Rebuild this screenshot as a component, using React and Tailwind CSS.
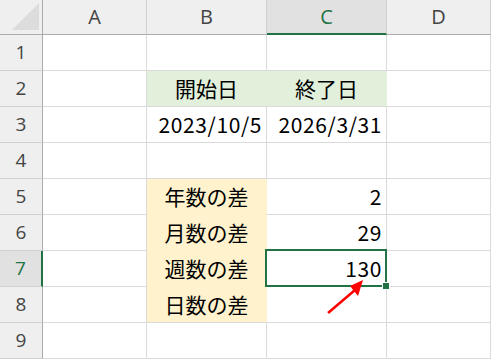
// App.jsx — Excel 風シート（週数の差）
const COLS = ['A', 'B', 'C', 'D'];
const ROWS = [1, 2, 3, 4, 5, 6, 7, 8, 9];

const GREEN = 'bg-[#e2efda] border-r-[#e2efda]';
const YELLOW = 'bg-[#fff2cc] border-r-[#fff2cc]';

// 各セルの内容・配置・塗り
const CELLS = {
  B2: { text: '開始日', align: 'center', fill: GREEN },
  C2: { text: '終了日', align: 'center', fill: GREEN },
  B3: { text: '2023/10/5', align: 'right' },
  C3: { text: '2026/3/31', align: 'right' },
  B5: { text: '年数の差', align: 'center', fill: YELLOW + ' border-b-[#fff2cc]' },
  C5: { text: '2', align: 'right' },
  B6: { text: '月数の差', align: 'center', fill: YELLOW + ' border-b-[#fff2cc]' },
  C6: { text: '29', align: 'right' },
  B7: { text: '週数の差', align: 'center', fill: YELLOW + ' border-b-[#fff2cc]' },
  C7: { text: '130', align: 'right' },
  B8: { text: '日数の差', align: 'center', fill: YELLOW },
};

function Cell({ id }) {
  const c = CELLS[id];
  const align = c?.align === 'center' ? 'justify-center' : 'justify-end pr-[4px] tracking-[0.6px]';
  return (
    <div className={`flex items-center border-r border-b border-[#dadada] ${align} ${c?.fill || 'bg-white'}`}>
      {c && <span className="text-[21px] leading-none text-black whitespace-nowrap">{c.text}</span>}
    </div>
  );
}

export default function App() {
  return (
    <div className="relative w-[491px] h-[359px] overflow-hidden bg-white" style={{ fontFamily: '"Noto Sans CJK JP", "Noto Sans", sans-serif' }}>
      <div className="grid grid-cols-[43px_104px_120px_120px_104px] grid-rows-[35px_repeat(9,36px)]">
        {/* 左上の角 */}
        <div className="relative bg-[#efefef] border-r border-b border-r-[#ababab] border-b-[#ababab]">
          <svg className="absolute inset-0" width="42" height="34" viewBox="0 0 42 34">
            <polygon points="12,30 39,30 39,3" fill="#dcdcdc" />
          </svg>
        </div>

        {/* 列見出し */}
        {COLS.map((col) => {
          const active = col === 'C';
          return (
            <div key={col}
              className={`flex items-center justify-center border-r border-[#d0d0d0] ${active ? 'bg-[#e1e1e1] border-b-2 border-b-[#217346] text-[#217346]' : 'bg-[#efefef] border-b border-b-[#ababab] text-[#444]'}`}
              style={{ fontFamily: '"Open Sans", "Noto Sans", sans-serif' }}>
              <span className="text-[20px] leading-none">{col}</span>
            </div>
          );
        })}

        {ROWS.map((row) => {
          const active = row === 7;
          return [
            <div key={'h' + row}
              className={`flex items-center justify-center border-b border-[#d0d0d0] ${active ? 'bg-[#e1e1e1] border-r-2 border-r-[#217346] text-[#217346]' : 'bg-[#efefef] border-r border-r-[#ababab] text-[#444]'}`}
              style={{ fontFamily: '"Open Sans", "Noto Sans", sans-serif' }}>
              <span className="text-[19px] leading-none">{row}</span>
            </div>,
            ...COLS.map((col) => <Cell key={col + row} id={col + row} />),
          ];
        })}
      </div>

      {/* 選択セル C7 */}
      <div className="absolute left-[265px] top-[249px] w-[122px] h-[38px] border-2 border-[#217346]" />
      <div className="absolute left-[382px] top-[282px] w-[8px] h-[8px] bg-[#217346] border border-white" />

      {/* 赤い矢印 */}
      <svg className="absolute left-0 top-0" width="491" height="359" viewBox="0 0 491 359">
        <line x1="328" y1="313" x2="355" y2="290" stroke="#ff0000" strokeWidth="2.5" />
        <polygon points="363,280 350,286 358,296" fill="#ff0000" />
      </svg>
    </div>
  );
}
